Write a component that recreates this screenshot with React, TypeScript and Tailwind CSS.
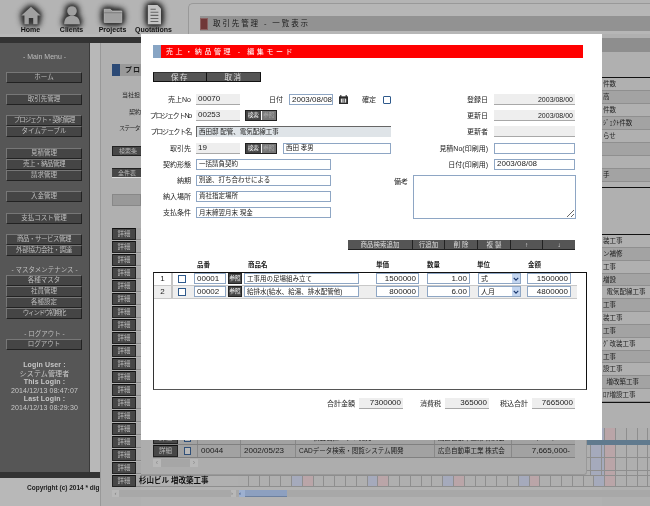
import React from "react"

const font = "font-['Liberation_Sans','Noto_Sans_CJK_JP',sans-serif]"

function SideButton({ label, squeeze = "" }: { label: string; squeeze?: string }) {
    return (
        <div className={`ml-[6px] mr-[7px] h-[11px] flex items-center justify-center border border-t-[#777] border-l-[#777] border-r-[#222] border-b-[#222] bg-[#454545] text-[6.5px] leading-none text-[#bebebe] whitespace-nowrap ${squeeze}`}>
            {label}
        </div>
    )
}

function Sidebar() {
    return (
        <div className="w-[90px] h-[429px] bg-[#565656] border-r border-[#3a3a3a] text-[#bdbdbd] flex flex-col">
            <div className="mt-[10px] mb-[11px] text-center text-[7px] leading-[8px]">- Main Menu -</div>
            <SideButton label="ホーム" />
            <div className="h-[11px]" />
            <SideButton label="取引先管理" />
            <div className="h-[10px]" />
            <SideButton label="プロジェクト・契約管理" squeeze="tracking-[-1px]" />
            <SideButton label="タイムテーブル" />
            <div className="h-[11px]" />
            <SideButton label="見積管理" />
            <SideButton label="売上・納品管理" squeeze="tracking-[-0.5px]" />
            <SideButton label="請求管理" />
            <div className="h-[10px]" />
            <SideButton label="入金管理" />
            <div className="h-[11px]" />
            <SideButton label="支払コスト管理" />
            <div className="h-[10px]" />
            <SideButton label="商品・サービス管理" squeeze="tracking-[-0.5px]" />
            <SideButton label="外部協力会社・調達" squeeze="tracking-[-0.3px]" />
            <div className="mt-[10px] mb-[1px] h-[8px] text-center text-[6.5px] leading-[8px]">- マスタメンテナンス -</div>
            <SideButton label="各種マスタ" />
            <SideButton label="社員管理" />
            <SideButton label="各種設定" />
            <SideButton label="ウィンドウ初期化" squeeze="tracking-[-1.2px]" />
            <div className="mt-[11px] mb-[1px] h-[8px] text-center text-[6.5px] leading-[8px]">- ログアウト -</div>
            <SideButton label="ログアウト" />
            <div className="mt-[11px] flex flex-col items-center text-[7px] leading-[8.5px] tracking-[0.15px] text-[#c8c8c8]">
                <div className="font-bold">Login User :</div>
                <div>システム管理者</div>
                <div className="font-bold">This Login :</div>
                <div>2014/12/13 08:47:07</div>
                <div className="font-bold">Last Login :</div>
                <div>2014/12/13 08:29:30</div>
            </div>
        </div>
    )
}

function NavIcon({ label, children }: { label: string; children: React.ReactNode }) {
    return (
        <div className="w-[41px] flex flex-col items-center">
            <svg viewBox="0 0 24 24" className="w-[22px] h-[22px] mt-[4px] [filter:drop-shadow(0_0_3px_#333)_drop-shadow(0_0_2px_#333)_drop-shadow(0_0_1px_#444)]">
                {children}
            </svg>
            <div className="mt-[1px] text-[7px] leading-[8px] font-bold text-[#111] whitespace-nowrap">{label}</div>
        </div>
    )
}

function DetailButton({ wide }: { wide?: boolean }) {
    return (
        <div className={`${wide ? "w-[25px]" : "w-[24px]"} shrink-0 h-[12px] flex items-center justify-center border border-[#222] border-t-[#111] bg-[#474747] text-[6.5px] leading-none text-[#bbb]`}>
            詳細
        </div>
    )
}

function BgRow({ no, date, name, company, amount }: { no: string; date: string; name: string; company: string; amount: string }) {
    return (
        <div className="h-[13px] flex items-center border-b border-[#808080] bg-[#a2a2a2] text-[#1c1c1c] whitespace-nowrap">
            <DetailButton wide />
            <div className="w-[19px] flex justify-center">
                <div className="w-[7px] h-[8px] border border-[#2f4f78] bg-[#b8b8b8]" />
            </div>
            <div className="w-[43px] pl-[3px] border-l border-[#888] text-[8px]">{no}</div>
            <div className="w-[55px] pl-[3px] border-l border-[#888] text-[8px]">{date}</div>
            <div className="w-[139px] pl-[3px] border-l border-[#888] text-[6.5px] leading-[12px]">{name}</div>
            <div className="w-[77px] pl-[3px] border-l border-[#888] text-[6.5px] leading-[12px]">{company}</div>
            <div className="w-[64px] pr-[5px] text-right border-l border-[#888] text-[8px]">{amount}</div>
        </div>
    )
}

// one row of the schedule grid; marks[0] is the blue weekday column, the rest pink
function Cells({ count, marks, offset = "" }: { count: number; marks: number[]; offset?: string }) {
    return (
        <div className={`flex h-full ${offset}`}>
            {Array.from({ length: count }).map((_, i) => {
                const m = marks.includes(i % 7) ? (i % 7 === marks[0] ? "bg-[#a5aabc]" : "bg-[#baa5a8]") : "bg-[#afafaf]"
                return <div key={i} className={`w-[10.8px] shrink-0 h-full border-r border-[#8e8e8e] ${m}`} />
            })}
        </div>
    )
}

const rightTop = ["件数", "高", "件数", "ｼﾞｪｸﾄ件数", "らせ", "", "", "手"]
const rightBottom = ["装工事", "ン補修", "工事", "増設", "  電気配線工事", "工事", "装工事", "工事", "ｸﾞ改装工事", "工事", "設工事", "  増改築工事", "ﾛｱ増設工事"]

function RightColumn() {
    return (
        <div className="w-[48px] h-full shrink-0 flex flex-col bg-[#b0b0b0] text-[6.5px] text-[#1e1e1e] overflow-hidden whitespace-pre">
            <div className="h-[4px]" />
            <div className="h-[14px] bg-[#8e8e8e]" />
            <div className="h-[25px]" />
            <div className="border-t border-[#111] h-[110px] overflow-hidden">
                {rightTop.map((t, i) => (
                    <div key={i} className={`h-[13px] flex items-center pl-[1px] border-b border-[#8f8f8f] ${i % 2 ? "bg-[#a3a3a3]" : "bg-[#b0b0b0]"}`}>{t}</div>
                ))}
            </div>
            <div className="border-t border-[#111] h-[47px]" />
            <div className="border-t border-b border-[#111]">
                {rightBottom.map((t, i) => (
                    <div key={i} className={`h-[12.85px] flex items-center pl-[1px] border-b border-[#8f8f8f] ${i % 2 ? "bg-[#a3a3a3]" : "bg-[#b0b0b0]"}`}>{t}</div>
                ))}
            </div>
            <div className="h-[25px]" />
            <div className="h-[12px]"><Cells count={6} marks={[0, 1]} offset="-ml-[7.5px]" /></div>
            <div className="h-[5px] bg-[#607a8e]" />
            <div className="h-[30px] flex flex-col">
                <div className="h-[13px] border-b border-[#8e8e8e]"><Cells count={6} marks={[0, 1]} offset="-ml-[7.5px]" /></div>
                <div className="h-[13px] border-b border-[#8e8e8e]"><Cells count={6} marks={[0, 1]} offset="-ml-[7.5px]" /></div>
                <div className="h-[4px]"><Cells count={6} marks={[0, 1]} offset="-ml-[7.5px]" /></div>
            </div>
            <div className="h-[12px] border-y border-[#8e8e8e]"><Cells count={6} marks={[0, 1]} offset="-ml-[7.5px]" /></div>
            <div className="h-[3px]" />
            <div className="h-[7px] bg-[#a8a8a8]" />
        </div>
    )
}

function LeftColumn() {
    return (
        <div className="w-[41px] shrink-0 h-full flex flex-col overflow-hidden whitespace-nowrap text-[6px] text-[#1e1e1e]">
            <div className="h-[3px] bg-[#b2b2b2]" />
            <div className="h-[6px] bg-[#333]" />
            <div className="flex-1 bg-[#b0b0b0] border-l border-[#999] pl-[11px] flex flex-col">
                <div className="mt-[21px] h-[12px] w-[29px] flex items-center bg-[#999]">
                    <div className="w-[8px] h-full bg-[#2c4a76]" />
                    <span className="ml-[5px] text-[7px] font-bold tracking-[1px]">プロ</span>
                </div>
                <div className="mt-[15px] ml-[10px] h-[8px] leading-[8px]">当社担</div>
                <div className="mt-[9px] ml-[17px] h-[8px] leading-[8px]">契約</div>
                <div className="mt-[8px] ml-[7px] h-[8px] leading-[8px] tracking-[-0.8px]">ステータ</div>
                <div className="mt-[14px] w-[29px] h-[10px] bg-[#474747] border border-[#222] border-r-0 text-[#bbb] leading-[8px] pl-[6px]">検索条</div>
                <div className="mt-[12px] w-[29px] h-[10px] bg-[#474747] border-t border-[#222] border-b border-b-[#ddd] text-[#bbb] leading-[8px] pl-[6px]">全件表</div>
                <div className="mt-[16px] w-[29px] h-[12px] bg-[#999] border border-[#888]" />
                <div className="mt-[22px] flex flex-col gap-[1px]">
                    {Array.from({ length: 20 }).map((_, i) => (
                        <div key={i} className="flex">
                            <DetailButton />
                            <div className="flex-1 bg-[#a8a8a8] border-b border-[#8a8a8a]" />
                        </div>
                    ))}
                </div>
                <div className="mt-[3px] h-[7px] w-[29px] flex bg-[#a8a8a8]">
                    <span className="w-[7px] bg-[#b8b8b8] text-[6px] leading-[6px] text-center text-[#777]">‹</span>
                </div>
            </div>
        </div>
    )
}

function CenterColumn() {
    return (
        <div className="w-[461px] shrink-0 h-full flex flex-col bg-[#b2b2b2]">
            <div className="h-[398px] shrink-0" />
            <div className="h-[43px] shrink-0 flex">
                <div className="w-[446px] shrink-0 pl-[12px] pr-[11px] rounded-br-[3px] bg-[#adadad] border-r border-b border-[#999]">
                    <BgRow no="00043" date="2002/04/06" name="HDD検査装置ソフト開発" company="広島自動車工業 株式会" amount="7,665,000-" />
                    <BgRow no="00044" date="2002/05/23" name="CADデータ検索・閲覧システム開発" company="広島自動車工業 株式会" amount="7,665,000-" />
                    <div className="mt-[1px] w-[45px] h-[8px] flex justify-between bg-[#a6a6a6] rounded-[2px] text-[7px] leading-[7px] text-[#888]">
                        <span className="w-[8px] text-center bg-[#b8b8b8]">‹</span>
                        <span className="w-[8px] text-center bg-[#b8b8b8]">›</span>
                    </div>
                </div>
                <div className="w-[15px] shrink-0 flex flex-col overflow-hidden">
                    <div className="h-[8px]"><Cells count={3} marks={[1, 2]} offset="-ml-[7px]" /></div>
                    <div className="h-[5px] bg-[#607a8e]" />
                    <div className="h-[13px] border-b border-[#8e8e8e]"><Cells count={3} marks={[1, 2]} offset="-ml-[7px]" /></div>
                    <div className="h-[13px] border-b border-[#8e8e8e]"><Cells count={3} marks={[1, 2]} offset="-ml-[7px]" /></div>
                    <div className="h-[4px]"><Cells count={3} marks={[1, 2]} offset="-ml-[7px]" /></div>
                </div>
            </div>
            <div className="h-[12px] shrink-0 flex items-stretch border-y border-[#8e8e8e] bg-[#b0b0b0]">
                <div className="-ml-[2px] w-[99px] shrink-0 text-[7.5px] leading-[10px] font-bold text-[#111] whitespace-nowrap">杉山ビル 増改築工事</div>
                <div className="overflow-hidden"><Cells count={34} marks={[5, 6]} /></div>
            </div>
            <div className="mt-[3px] h-[7px] shrink-0 flex items-stretch bg-[#a8a8a8]">
                <div className="w-[90px]" />
                <div className="w-[5px] bg-[#b8b8b8] text-[6px] leading-[6px] text-[#777]">›</div>
                <div className="ml-[3px] w-[6px] bg-[#9db0d0] text-[6px] leading-[6px] text-[#1d3a70]">‹</div>
                <div className="w-[42px] bg-[#8da0c0] border-b border-[#6c80a0]" />
            </div>
        </div>
    )
}

function Box({ children, className = "", tone = "input", jp, small }: { children?: React.ReactNode; className?: string; tone?: "input" | "ro" | "plain"; jp?: boolean; small?: boolean }) {
    const toneClass =
        tone === "input" ? "bg-white border border-[#8ea6c4]" : tone === "ro" ? "bg-[#eeeeee] border-b border-[#a8a8a8]" : ""
    const size = jp ? "text-[6.5px]" : small ? "text-[7px]" : "text-[8px]"
    return (
        <div className={`h-[11px] flex items-center px-[2px] leading-none text-[#222] whitespace-nowrap overflow-hidden ${size} ${toneClass} ${className}`}>
            {children}
        </div>
    )
}

function Label({ children, className = "" }: { children: React.ReactNode; className?: string }) {
    return <div className={`text-[7px] leading-[11px] text-[#222] whitespace-nowrap ${className}`}>{children}</div>
}

function SearchPair() {
    return (
        <div className="ml-[5px] flex w-[32px] h-[11px] border border-[#222] text-[5.5px] leading-[9px] text-center">
            <div className="w-[15px] bg-[#454545] text-white">検索</div>
            <div className="w-[15px] ml-[1px] bg-[#777] text-[#aaa]">参照</div>
        </div>
    )
}

function FormRow({ label, squeeze = "", children }: { label: string; squeeze?: string; children: React.ReactNode }) {
    return (
        <div className="h-[11px] flex items-center">
            <Label className={`w-[50px] flex justify-end ${squeeze}`}>{label}</Label>
            <div className="ml-[5px] flex items-center">{children}</div>
        </div>
    )
}

function InfoRow({ label, children }: { label: string; children: React.ReactNode }) {
    return (
        <div className="h-[11px] flex items-center">
            <Label className="w-[94px] text-right">{label}</Label>
            <div className="ml-[6px]">{children}</div>
        </div>
    )
}

const toolbar = [
    { t: "商品検索追加", w: "w-[65px]" },
    { t: "行追加", w: "w-[32px]" },
    { t: "削 除", w: "w-[33px]" },
    { t: "複 製", w: "w-[33px]" },
    { t: "↑", w: "w-[32px]" },
    { t: "↓", w: "w-[32px]" },
]

function LineRow({ no, code, name, price, qty, unit, amount, odd }: { no: string; code: string; name: string; price: string; qty: string; unit: string; amount: string; odd?: boolean }) {
    return (
        <div className={`h-[13px] w-[423px] flex items-center border-b border-[#c8c8c8] ${odd ? "bg-[#eeeeee]" : "bg-white"}`}>
            <div className="w-[19px] text-center text-[8px] text-[#222] border-r-2 border-[#c4c4c4]">{no}</div>
            <div className="ml-[5px] w-[8px] h-[8px] border border-[#2f5a8c] bg-white" />
            <Box className="ml-[8px] w-[32px]">{code}</Box>
            <div className="ml-[2px] w-[14px] h-[11px] bg-[#454545] border border-[#222] text-[5.5px] leading-[9px] text-center text-white">参照</div>
            <Box jp className="ml-[2px] w-[115px]">{name}</Box>
            <Box className="ml-[17px] w-[43px] justify-end">{price}</Box>
            <Box className="ml-[8px] w-[43px] justify-end">{qty}</Box>
            <div className="ml-[8px] w-[43px] h-[11px] flex items-center justify-between border border-[#8ea6c4] bg-white pl-[2px] text-[7px] text-[#222]">
                {unit}
                <span className="w-[8px] h-[9px] flex items-center justify-center bg-[#c4d6f0]">
                    <svg viewBox="0 0 8 8" className="w-[6px] h-[6px]"><path d="M1 2.5 L4 5.5 L7 2.5" fill="none" stroke="#1d3a70" strokeWidth="1.6" /></svg>
                </span>
            </div>
            <Box className="ml-[6px] w-[44px] justify-end">{amount}</Box>
        </div>
    )
}

function Modal() {
    return (
        <div className="absolute left-[141px] top-[34px] w-[461px] h-[406px] bg-white flex flex-col">
            {/* Title */}
            <div className="ml-[12px] mt-[11px] w-[430px] h-[13px] flex items-center bg-[#ff0000]">
                <div className="w-[8px] h-full bg-[#88a5c4]" />
                <span className="ml-[5px] text-[7px] leading-none tracking-[2.6px] text-white whitespace-nowrap">売上・納品管理 - 編集モード</span>
            </div>

            {/* Save / cancel */}
            <div className="ml-[12px] mt-[14px] flex h-[10px] text-[7.5px] leading-[9px] text-center text-[#ddd] tracking-[1.5px]">
                <div className="w-[54px] bg-[#555] border border-[#111] border-t-[#333]">保存</div>
                <div className="w-[54px] bg-[#555] border border-[#111] border-t-[#333] border-l-0">取消</div>
            </div>

            {/* Form */}
            <div className="mt-[12px] flex">
                <div className="w-[253px] flex flex-col gap-[5.2px]">
                    <FormRow label="売上No">
                        <Box tone="ro" className="w-[44px]">00070</Box>
                        <Label className="ml-[29px]">日付</Label>
                        <Box className="ml-[6px] w-[44px]">2003/08/08</Box>
                        <svg viewBox="0 0 10 10" className="ml-[6px] w-[9px] h-[9px]">
                            <path d="M0 1.5h10v8.5H0z" fill="#2a2a2a" />
                            <path d="M2 0v3M8 0v3" stroke="#2a2a2a" strokeWidth="1.2" />
                            <path d="M2 4h6v4.5H2z" fill="#e4e4e4" />
                            <path d="M4.4 4v4.5M6 4v4.5" stroke="#2a2a2a" strokeWidth="0.8" />
                        </svg>
                        <Label className="ml-[14px]">確定</Label>
                        <div className="ml-[7px] w-[8px] h-[8px] rounded-[1px] border border-[#2f5a8c] bg-white" />
                    </FormRow>
                    <FormRow label="プロジェクトNo" squeeze="tracking-[-1.2px]">
                        <Box tone="ro" className="w-[44px]">00253</Box>
                        <SearchPair />
                    </FormRow>
                    <FormRow label="プロジェクト名" squeeze="tracking-[-1.2px]">
                        <Box jp tone="plain" className="w-[195px] bg-[#dfe4e8] border-t border-l border-[#666]">西田邸 配管、電気配線工事</Box>
                    </FormRow>
                    <FormRow label="取引先">
                        <Box tone="ro" className="w-[44px]">19</Box>
                        <SearchPair />
                        <Box jp className="ml-[6px] w-[108px]">西田 孝男</Box>
                    </FormRow>
                    <FormRow label="契約形態">
                        <Box jp className="w-[135px]">一括請負契約</Box>
                    </FormRow>
                    <FormRow label="納期">
                        <Box jp className="w-[135px]">別途、打ち合わせによる</Box>
                    </FormRow>
                    <FormRow label="納入場所">
                        <Box jp className="w-[135px]">貴社指定場所</Box>
                    </FormRow>
                    <FormRow label="支払条件">
                        <Box jp className="w-[135px]">月末締翌月末 現金</Box>
                    </FormRow>
                </div>
                <div className="flex flex-col gap-[5.2px]">
                    <InfoRow label="登録日"><Box small tone="ro" className="w-[81px] justify-end">2003/08/00</Box></InfoRow>
                    <InfoRow label="更新日"><Box small tone="ro" className="w-[81px] justify-end">2003/08/00</Box></InfoRow>
                    <InfoRow label="更新者"><Box tone="ro" className="w-[81px]" /></InfoRow>
                    <InfoRow label="見積No(印刷用)"><Box className="w-[81px]" /></InfoRow>
                    <InfoRow label="日付(印刷用)"><Box className="w-[81px]">2003/08/08</Box></InfoRow>
                    <div className="flex h-[44px]">
                        <Label className="w-[19px] mt-[1px]">備考</Label>
                        <textarea readOnly className="w-[163px] h-[44px] border border-[#8ea6c4] bg-white" />
                    </div>
                </div>
            </div>

            {/* Line toolbar */}
            <div className="mt-[21px] ml-[207px] w-[227px] flex h-[10px] bg-[#555] border-b border-[#222] text-[6.5px] leading-[10px] text-center text-[#ddd]">
                {toolbar.map((b) => (
                    <div key={b.t} className={`${b.w} border-r border-[#222] last:border-r-0 whitespace-nowrap`}>{b.t}</div>
                ))}
            </div>

            {/* Column heads */}
            <div className="mt-[11px] h-[8px] flex text-[6.5px] leading-[8px] font-bold text-[#222]">
                <div className="ml-[56px] w-[51px]">品番</div>
                <div className="w-[128px]">商品名</div>
                <div className="w-[51px]">単価</div>
                <div className="w-[50px]">数量</div>
                <div className="w-[51px]">単位</div>
                <div>金額</div>
            </div>

            {/* Lines */}
            <div className="mt-[3px] ml-[12px] w-[434px] h-[118px] border border-[#111] border-b-[#555] border-l-[#333] bg-white">
                <LineRow no="1" code="00001" name="工事用の足場組み立て" price="1500000" qty="1.00" unit="式" amount="1500000" />
                <LineRow odd no="2" code="00002" name="給排水(給水、給湯、排水配管他)" price="800000" qty="6.00" unit="人月" amount="4800000" />
            </div>

            {/* Totals */}
            <div className="mt-[8px] flex items-center">
                <Label className="ml-[186px] w-[32px]">合計金額</Label>
                <Box tone="ro" className="w-[44px] justify-end">7300000</Box>
                <Label className="ml-[17px] w-[25px]">消費税</Label>
                <Box tone="ro" className="w-[44px] justify-end">365000</Box>
                <Label className="ml-[11px] w-[32px]">税込合計</Label>
                <Box tone="ro" className="w-[43px] justify-end">7665000</Box>
            </div>
        </div>
    )
}

export default function App() {
    return (
        <div className={`relative w-[650px] h-[506px] overflow-hidden bg-[#b4b4b4] blur-[0.3px] ${font}`}>
            {/* Top nav */}
            <div className="h-[34px] flex">
                <div className="w-[188px] shrink-0 pl-[10px] flex">
                    <NavIcon label="Home">
                        <path d="M12 3 L23 13 H19.5 V23 H14.5 V16 H9.5 V23 H4.5 V13 H1 Z" fill="#a0a0a0" />
                    </NavIcon>
                    <NavIcon label="Clients">
                        <circle cx="12" cy="8" r="5.5" fill="#a0a0a0" />
                        <path d="M3 23 C3 16 7 13.5 12 13.5 C17 13.5 21 16 21 23 Z" fill="#a0a0a0" />
                    </NavIcon>
                    <NavIcon label="Projects">
                        <path d="M2 6 H9 L11 8 H22 V21 H2 Z" fill="#a0a0a0" stroke="#c8c8c8" strokeWidth="0.8" />
                        <path d="M2 10 H22" stroke="#777" strokeWidth="1" />
                    </NavIcon>
                    <NavIcon label="Quotations">
                        <path d="M5 1 H16 L20 5 V23 H5 Z" fill="#c4c4c4" />
                        <path d="M8 6 H14 M8 9.5 H17 M8 13 H17 M8 16.5 H17 M8 20 H17" stroke="#666" strokeWidth="1.2" />
                    </NavIcon>
                </div>
                <div className="flex-1 mt-[3px] pl-[11px] pt-[12px] bg-[#b6b6b6] border-l border-t border-[#999] rounded-tl-[5px]">
                    <div className="h-[15px] flex items-center bg-[#929292]">
                        <div className="w-[8px] h-[12px] bg-[#703838] border border-[#8a6060]" />
                        <span className="ml-[5px] text-[7.5px] leading-none tracking-[1.9px] text-[#1a1a1a] whitespace-nowrap">取引先管理 - 一覧表示</span>
                    </div>
                </div>
            </div>

            {/* Background page */}
            <div className="h-[472px] flex">
                <div className="w-[100px] shrink-0 h-full flex flex-col overflow-hidden bg-[#b8b8b8]">
                    <div className="h-[3px]" />
                    <div className="h-[6px] bg-[#333]" />
                    <Sidebar />
                    <div className="h-[6px] bg-[#333]" />
                    <div className="mt-[6px] ml-[27px] text-[6.5px] leading-[8px] font-bold text-[#1c1c1c] whitespace-nowrap">Copyright (c) 2014 * dig</div>
                </div>
                <LeftColumn />
                <CenterColumn />
                <RightColumn />
            </div>

            <Modal />
        </div>
    )
}
